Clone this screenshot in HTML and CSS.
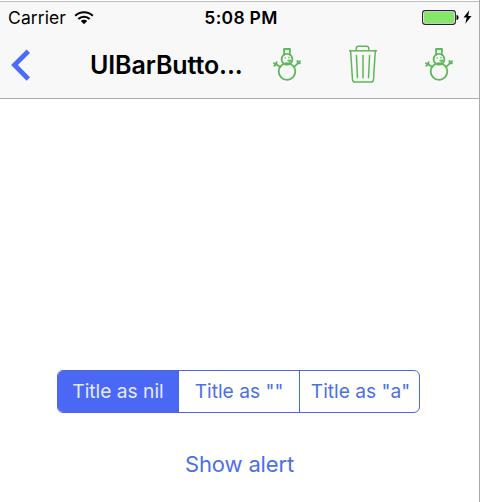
FILE: index.html
```html
<!DOCTYPE html>
<html lang="en">
<head>
<meta charset="utf-8">
<title>UIBarButtonItem</title>
<link rel="stylesheet" href="styles.css">
</head>
<body>
<svg width="0" height="0" class="defs">
  <symbol id="snowman" viewBox="0 0 28 34">
    <g fill="none" stroke="currentColor" stroke-width="1.8" stroke-linejoin="round" stroke-linecap="round">
      <path d="M11.200 7.600 11 2h6l-.2 5.600"/>
      <circle cx="14" cy="12.200" r="5.400"/>
      <circle cx="14" cy="24.500" r="8.300"/>
      <path d="M6.600 19.600 2.400 16.800M1.200 18.800l2-1.400.4-2.200M1 16.200l1.600.8M21.400 19.600l4.200-4M27 16.400l-2.400-.2-.1-2.400M27 14.200l-1.800 1.600"/>
      <path d="M15 13.400h2.600l-1.600 1.600" stroke-width="1.4"/>
    </g>
    <circle cx="12.300" cy="11" r=".8" fill="currentColor"/>
    <circle cx="15.900" cy="10.600" r=".8" fill="currentColor"/>
  </symbol>
</svg>
<div class="screen">
  <header class="header">
    <div class="status">
      <div class="carrier">
        <span class="carrier-name">Carrier</span>
        <svg class="wifi" width="20" height="15" viewBox="0 0 20 15">
          <g fill="none" stroke="#000" stroke-width="2.1">
            <path d="M1.200 5.800a12.600 12.600 0 0 1 17.600 0"/>
            <path d="M4.300 9.100a8.100 8.100 0 0 1 11.400 0"/>
          </g>
          <path d="M6.800 11.100a4.600 4.600 0 0 1 6.400 0L10 14.200z"/>
        </svg>
      </div>
      <div class="time">5:08 PM</div>
      <div class="power">
        <svg width="37" height="15" viewBox="0 0 37 15">
          <rect x=".6" y=".6" width="32.8" height="13.8" rx="2.6" fill="#fff" stroke="#222" stroke-width="1.1"/>
          <rect x="2" y="2" width="30" height="11" rx="1" fill="#86e669"/>
          <path d="M34.500 5c2.800.3 2.800 4.700 0 5z"/>
        </svg>
        <svg class="bolt" width="9" height="14" viewBox="0 0 9 14">
          <path d="M6.300.3.500 7.600h3.200L2.300 13.700 8.500 5.900H5.200z"/>
        </svg>
      </div>
    </div>
    <nav class="nav">
      <svg class="back" width="20" height="34" viewBox="0 0 20 34">
        <path d="M18.300 2.200 4.500 16l13.800 14" fill="none" stroke="#4b6cf5" stroke-width="4.800"/>
      </svg>
      <h1 class="title">UIBarButto...</h1>
      <div class="actions">
        <svg class="snowman" width="28" height="34"><use href="#snowman"/></svg>
        <svg class="trash" width="28" height="38" viewBox="0 0 28 38" fill="none" stroke="#5cb85a" stroke-width="1.500">
          <path d="M0 5.800h28"/>
          <path d="M7.300 5.500V3.200q0-2 2-2h8.400q2 0 2 2v2.300"/>
          <path d="M1.600 6l1.900 28.600q.2 2.400 2.400 2.400h16.200q2.200 0 2.400-2.400L26.300 6"/>
          <path d="M7.400 10l1.100 23.300M14 10v23.300M20.600 10l-1.100 23.300"/>
        </svg>
        <svg class="snowman" width="28" height="34"><use href="#snowman"/></svg>
      </div>
    </nav>
  </header>
  <main class="content">
    <div class="segments">
      <button class="segment selected"><span>Title as nil</span></button>
      <button class="segment"><span>Title as ""</span></button>
      <button class="segment"><span>Title as "a"</span></button>
    </div>
    <button class="alert">Show alert</button>
  </main>
</div>
</body>
</html>
```
FILE: styles.css
```css
* { box-sizing: border-box; }
body {
  margin: 0;
  background: #fff;
  color: #000;
  font-family: Inter, "Liberation Sans", sans-serif;
}
svg { display: block; flex: none; }
.defs { position: absolute; }
button {
  margin: 0;
  padding: 0;
  border: 0;
  background: none;
  color: #4b70e8;
  font: inherit;
  white-space: nowrap;
}
.screen {
  width: 480px;
  height: 502px;
  overflow: hidden;
  display: flex;
  flex-direction: column;
  padding-top: 1px;
  border-right: 1px solid #aaa;
}
.header {
  height: 98px;
  background: #f8f8f8;
  border-top: 1px solid #bcbcbc;
  border-bottom: 1px solid #acacac;
}
.status {
  height: 32px;
  display: grid;
  grid-template-columns: 1fr auto 1fr;
  align-items: center;
  padding: 0 7px 0 8px;
  font-size: 17.5px;
  line-height: 20px;
}
.carrier { display: flex; align-items: center; gap: 8px; }
.carrier-name { letter-spacing: 0.1px; }
.wifi { margin-bottom: 2px; }
.time { padding-left: 2px; font-weight: 600; letter-spacing: 0.3px; }
.power {
  display: flex;
  align-items: center;
  justify-content: flex-end;
  gap: 4px;
  padding-bottom: 2px;
}
.nav {
  height: 62px;
  display: flex;
  align-items: center;
  padding: 0 26px 0 10px;
}
.back { margin-top: 2px; }
.title {
  margin: 0 0 0 60px;
  font-size: 25px;
  font-weight: 600;
  line-height: 30px;
  letter-spacing: -0.1px;
  white-space: nowrap;
}
.actions {
  flex: 1;
  display: flex;
  align-items: center;
  justify-content: flex-end;
  gap: 48px;
  margin-bottom: 2px;
  color: #5cb85a;
}
.snowman { margin-bottom: 1px; }
.content {
  flex: 1;
  display: flex;
  flex-direction: column;
  align-items: center;
  padding: 271px 2px 0 0;
}
.segments {
  width: 363px;
  height: 43px;
  display: grid;
  grid-template-columns: 120px 121px 1fr;
  border: 1px solid #4b68d8;
  border-radius: 6px;
  overflow: hidden;
  font-size: 19.2px;
}
.segment { padding-bottom: 2px; }
.segment + .segment { border-left: 1px solid #4b68d8; }
.segment:last-child { padding-left: 2px; }
.selected { background: #4b68f5; color: #e4eafe; }
.alert {
  margin: 37px 0 0 2px;
  font-size: 22px;
  line-height: 28px;
  letter-spacing: -0.15px;
}
```
